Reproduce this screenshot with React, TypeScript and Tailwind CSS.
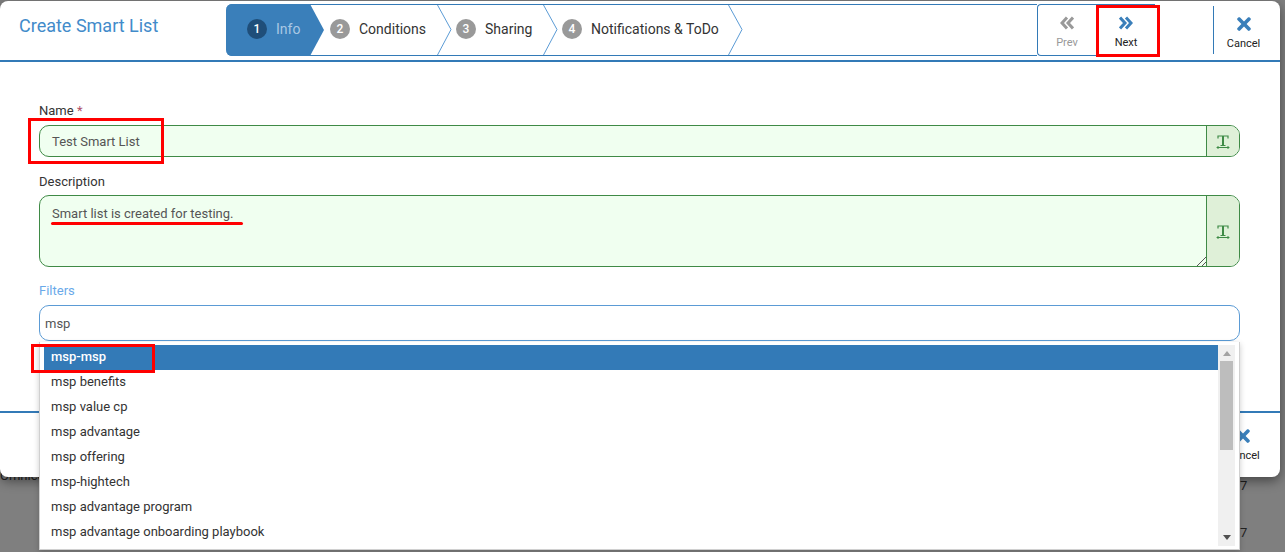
import { FaTimes } from 'react-icons/fa'

const steps = [
  { n: 2, label: 'Conditions', width: 'w-[126px]' },
  { n: 3, label: 'Sharing', width: 'w-[106px]' },
  { n: 4, label: 'Notifications & ToDo', width: 'w-[185px]' },
]

const options = [
  'msp-msp',
  'msp benefits',
  'msp value cp',
  'msp advantage',
  'msp offering',
  'msp-hightech',
  'msp advantage program',
  'msp advantage onboarding playbook',
]

function StepChevron() {
  return (
    <svg width="15" height="50" viewBox="0 0 15 50" className="absolute right-[4px] top-0">
      <path d="M0.5 0 L14 24.5 L0.5 50" fill="#fff" stroke="#5b9bd5" strokeWidth="1" />
    </svg>
  )
}

function DoubleChevron({ flip, color }: { flip?: boolean; color: string }) {
  return (
    <svg width="14" height="14" viewBox="0 0 14 14" fill="none" stroke={color} strokeWidth="3" className={flip ? '-scale-x-100' : ''}>
      <path d="M1 1.5 L6 7 L1 12.5" />
      <path d="M7 1.5 L12 7 L7 12.5" />
    </svg>
  )
}

function TextIcon() {
  return (
    <svg width="14" height="14" viewBox="0 0 14 14" fill="none" stroke="#3f8a46" className="mt-[1px]">
      <path d="M2 3.5V1H12V3.5" strokeWidth="1.2" />
      <path d="M7 1V10" strokeWidth="2" />
      <path d="M4.5 10.5H9.5" strokeWidth="1" />
      <path d="M1 12.5H13M2.5 11L1 12.5L2.5 14M11.5 11L13 12.5L11.5 14" strokeWidth="1" />
    </svg>
  )
}

function TextAddon() {
  return (
    <div className="flex w-[33px] items-center justify-center border-l border-[#3f8a46] bg-[#dff0d8]">
      <TextIcon />
    </div>
  )
}

export default function App() {
  return (
    <div className="relative h-[552px] w-[1285px] overflow-hidden bg-[#7f7f7f] font-['Roboto',sans-serif] text-[13px] text-[#333]">
      <div className="absolute left-0 top-[468px] text-[13px] leading-[16px] text-[#222]">Omnicete</div>
      <div className="absolute left-[1240px] top-[476px] text-[13px] text-[#222]">7</div>
      <div className="absolute left-[1240px] top-[523px] text-[13px] text-[#222]">7</div>

      <div className="relative mt-[1px] flex h-[476px] w-[1280px] flex-col rounded-lg bg-white shadow-[0_4px_12px_rgba(0,0,0,0.45)]">
        <header className="flex h-[61px] shrink-0 items-start border-b-2 border-[#337ab7]">
          <h1 className="w-[226px] shrink-0 pl-[19px] pt-[13px] text-[18px] leading-[24px] text-[#428bca]">Create Smart List</h1>

          <div className="mt-[3px] flex h-[52px] w-[811px] shrink-0 rounded-l-md border-y border-[#337ab7]">
            <div className="relative -my-px flex w-[84px] shrink-0 items-center rounded-l-md bg-[#3a7fba] pb-[2px] pl-[21px]">
              <span className="flex h-[20px] w-[20px] items-center justify-center rounded-full bg-[#1f4e79] text-[12px] font-medium text-white">1</span>
              <span className="ml-[9px] text-[14px] text-[#a9c8e4]">Info</span>
              <svg width="14" height="52" viewBox="0 0 14 52" className="absolute left-[84px] top-0">
                <path d="M0 0 L14 26 L0 52 Z" fill="#3a7fba" />
              </svg>
            </div>
            <div className="w-[20px] shrink-0" />
            {steps.map((s) => (
              <div key={s.n} className={`relative flex shrink-0 items-center pb-[2px] ${s.width}`}>
                <span className="flex h-[20px] w-[20px] shrink-0 items-center justify-center rounded-full bg-[#999] text-[12px] font-medium text-white">{s.n}</span>
                <span className="ml-[9px] whitespace-nowrap text-[14px] text-[#333]">{s.label}</span>
                <StepChevron />
              </div>
            ))}
          </div>

          <div className="mt-[3px] flex h-[52px] w-[118px] shrink-0 rounded-l-sm border border-r-0 border-[#337ab7]">
            <div className="flex w-[60px] flex-col items-center pt-[11px] text-[#999]">
              <DoubleChevron flip color="#999" />
              <span className="mt-[6px] text-[11px] leading-[14px]">Prev</span>
            </div>
            <div className="ml-[1px] flex w-[60px] flex-col items-center pt-[11px]">
              <DoubleChevron color="#3a7fba" />
              <span className="mt-[6px] text-[11px] leading-[14px] text-[#222]">Next</span>
            </div>
          </div>

          <div className="ml-[58px] mt-[5px] flex h-[48px] w-[60px] shrink-0 flex-col items-center border-l border-[#337ab7] pt-[8px]">
            <FaTimes className="h-[20px] w-[20px] text-[#3a7fba]" />
            <span className="mt-[3px] text-[11px] leading-[14px] text-[#222]">Cancel</span>
          </div>
        </header>

        <main className="flex-1 px-[39px] pr-[40px] pt-[39px]">
          <label className="block h-[24px] pt-[1px] leading-[18px]">
            Name <span className="text-[#b0506a]">*</span>
          </label>
          <div className="flex h-[32px] overflow-hidden rounded-[10px] border border-[#3f8a46] bg-[#f0fff0]">
            <div className="flex flex-1 items-center pl-[12px] pt-[1px] text-[#555]">Test Smart List</div>
            <TextAddon />
          </div>

          <label className="mt-[15px] block h-[23px] pt-[1px] leading-[18px]">Description</label>
          <div className="flex h-[72px] overflow-hidden rounded-[10px] border border-[#3f8a46] bg-[#f0fff0]">
            <div className="relative flex-1 pl-[12px] pt-[9px] leading-[18px] text-[#555]">
              Smart list is created for testing.
              <svg width="10" height="10" viewBox="0 0 10 10" className="absolute bottom-0 right-0" stroke="#555">
                <path d="M1 10 L10 1 M6 10 L10 6" />
              </svg>
            </div>
            <TextAddon />
          </div>

          <label className="mt-[15px] block h-[23px] leading-[18px] text-[#6aa9e9]">Filters</label>
          <div className="flex h-[36px] items-center rounded-[10px] border border-[#5b9bd5] bg-white pl-[5px] pt-[1px] text-[#555]">msp</div>
        </main>

        <footer className="flex h-[66px] shrink-0 justify-end border-t-2 border-[#337ab7] pr-[7px]">
          <div className="flex w-[60px] flex-col items-center pt-[13px]">
            <FaTimes className="h-[20px] w-[20px] text-[#3a7fba]" />
            <span className="mt-[3px] text-[11px] leading-[14px] text-[#222]">Cancel</span>
          </div>
        </footer>
      </div>

      {/* filters dropdown lies over the modal footer */}
      <div className="absolute left-[39px] top-[342px] z-20 flex h-[208px] w-[1201px] border-x border-b border-[#d0d0d0] bg-white px-[4px] py-[3px] shadow-[0_2px_6px_rgba(0,0,0,0.2)]">
        <ul className="min-w-0 flex-1">
          {options.map((o, i) => (
            <li key={o} className={`h-[25px] pl-[7px] leading-[24px] ${i === 0 ? 'bg-[#337ab7] font-medium text-white' : 'text-[#333]'}`}>
              {o}
            </li>
          ))}
        </ul>
        <div className="flex w-[17px] shrink-0 flex-col items-center bg-[#f0f0f0] py-[6px]">
          <svg width="8" height="5" viewBox="0 0 8 5" fill="#a3a3a3"><path d="M4 0L8 5H0Z" /></svg>
          <div className="mt-[5px] h-[89px] w-[13px] bg-[#bdbdbd]" />
          <div className="flex-1" />
          <svg width="8" height="5" viewBox="0 0 8 5" fill="#505050"><path d="M0 0H8L4 5Z" /></svg>
        </div>
      </div>

      {/* red annotation marks */}
      <div className="absolute left-[1096px] top-[5px] z-30 h-[52px] w-[64px] border-[3px] border-[#ff0000]" />
      <div className="absolute left-[28px] top-[118px] z-30 h-[46px] w-[136px] border-[3px] border-[#ff0000]" />
      <div className="absolute left-[51px] top-[222px] z-30 h-[3px] w-[192px] rounded-full bg-[#ff0000]" />
      <div className="absolute left-[31px] top-[344px] z-30 h-[29px] w-[124px] border-[3px] border-[#ff0000]" />
    </div>
  )
}
